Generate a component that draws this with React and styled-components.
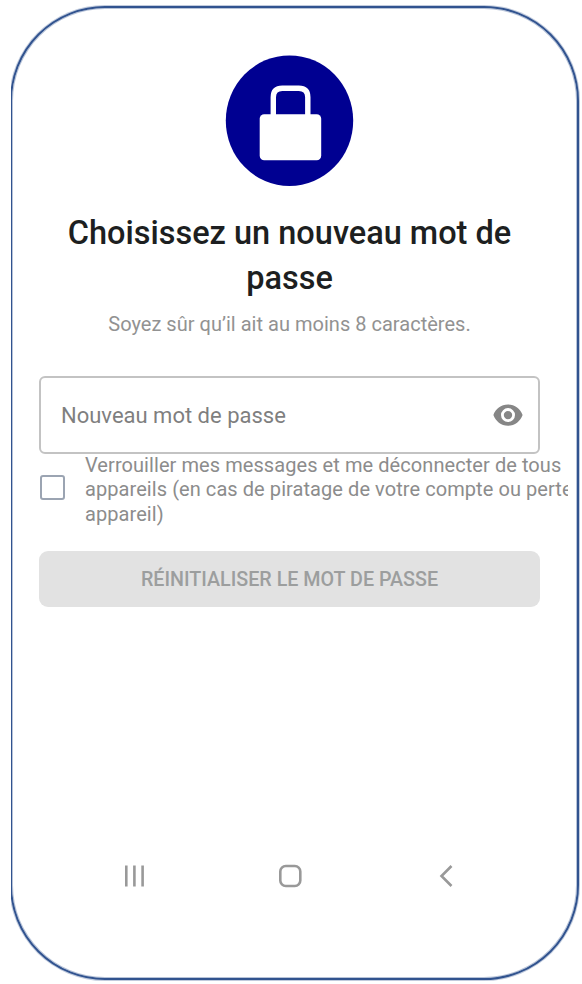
import React from "react";
import styled, { createGlobalStyle } from "styled-components";

const GlobalStyle = createGlobalStyle`
  * { box-sizing: border-box; }
  body { margin: 0; background: #fff; font-family: Roboto, "Liberation Sans", sans-serif; }
`;

const Page = styled.main`
  width: 582px;
  height: 984px;
  padding: 0 0 0 11px;
`;

const Clip = styled.div`
  height: 984px;
  padding-top: 6px;
  overflow: hidden;
`;

const Phone = styled.section`
  width: 569px;
  height: 974px;
  margin-left: -1px;
  padding: 47px 9px 0 27px;
  border: 2px solid #31538f;
  border-radius: 95px;
  box-shadow: 0 0 0 1px rgba(49, 83, 143, 0.3), inset 0 0 0 1px rgba(49, 83, 143, 0.35);
  display: flex;
  flex-direction: column;
  background: #fff;
`;

const Content = styled.div`
  width: 501px;
  display: flex;
  flex-direction: column;
  align-items: center;
`;

const Logo = styled.svg`
  display: block;
  width: 130px;
  height: 133px;
`;

const Title = styled.h1`
  margin: 23px 0 0;
  font-size: 32.5px;
  font-weight: 500;
  line-height: 45px;
  color: #1d1f21;
  text-align: center;
`;

const Hint = styled.p`
  margin: 11px 0 0;
  font-size: 20px;
  line-height: 24px;
  letter-spacing: 0.02px;
  color: #929292;
  white-space: nowrap;
`;

const Field = styled.div`
  width: 501px;
  height: 78px;
  margin-top: 40px;
  padding: 0 15px 0 20px;
  display: flex;
  align-items: center;
  justify-content: space-between;
  border: 2px solid #c3c3c3;
  border-radius: 6px;
  font-size: 22px;
  color: #7f7f7f;
`;

const EyeIcon = styled.svg`
  width: 30px;
  height: 24px;
`;

const Option = styled.div`
  width: 529px;
  display: flex;
  overflow: hidden;
`;

const Checkbox = styled.span`
  flex: none;
  width: 25px;
  height: 25px;
  margin: 21px 20px 0 1px;
  border: 2px solid #9ba4b2;
  border-radius: 3px;
`;

const OptionText = styled.p`
  margin: -1px 0 0;
  font-size: 20px;
  line-height: 24.3px;
  letter-spacing: 0.07px;
  color: #8c8c8c;
  white-space: nowrap;
`;

const Submit = styled.button`
  width: 501px;
  height: 56px;
  margin: 25px 0 0;
  padding: 2px 0 0;
  border: 0;
  border-radius: 9px;
  background: #e2e2e2;
  color: #9c9e9e;
  font: 500 19.7px/54px Roboto, sans-serif;
`;

const NavBar = styled.nav`
  width: 337px;
  height: 26px;
  margin: 256px 0 0 83px;
  display: flex;
  justify-content: space-between;
`;

const NavIcon = styled.svg`
  width: 26px;
  height: 26px;
  fill: none;
  stroke: #999;
  stroke-width: 2.6;
`;

export default function App() {
  return (
    <Page>
      <GlobalStyle />
      <Clip>
        <Phone>
          <Content>
            <Logo viewBox="225 55 130 133" aria-hidden="true">
              <ellipse cx="289.5" cy="120.7" rx="63.7" ry="65.3" fill="#000091" />
              <path d="M273.3 118V97.2q0-9 9-9h16.500q9 0 9 9V118" fill="none" stroke="#fff" strokeWidth="5.4" />
              <rect x="259.700" y="114.200" width="61.500" height="46" rx="4.500" fill="#fff" />
            </Logo>
            <Title>Choisissez un nouveau mot de<br />passe</Title>
            <Hint>Soyez sûr qu’il ait au moins 8 caractères.</Hint>
          </Content>
          <Field>
            <span>Nouveau mot de passe</span>
            <EyeIcon viewBox="493 403 30 24" aria-hidden="true">
              <path
                fillRule="evenodd"
                fill="#868686"
                d="M508 404.500C501 404.500 495.600 409 493.400 415C495.600 421 501 425.800 508 425.800S520.400 421 522.600 415C520.400 409 515 404.500 508 404.500ZM508 422.100a7 7 0 1 1 0-14a7 7 0 0 1 0 14ZM508 410.900a4.200 4.200 0 1 0 0 8.400a4.200 4.200 0 0 0 0-8.400Z"
              />
            </EyeIcon>
          </Field>
          <Option>
            <Checkbox role="checkbox" aria-checked="false" />
            <OptionText>
              Verrouiller mes messages et me déconnecter de tous<br />
              appareils (en cas de piratage de votre compte ou perte<br />
              appareil)
            </OptionText>
          </Option>
          <Submit disabled>RÉINITIALISER LE MOT DE PASSE</Submit>
          <NavBar>
            <NavIcon viewBox="0 0 26 26"><path d="M4.300 2.500v21M12.400 2.500v21M20.600 2.500v21" /></NavIcon>
            <NavIcon viewBox="0 0 26 26"><rect x="2.300" y="3" width="20" height="20" rx="5.500" /></NavIcon>
            <NavIcon viewBox="0 0 26 26"><path d="M18.500 3L8.500 13L18.500 23" /></NavIcon>
          </NavBar>
        </Phone>
      </Clip>
    </Page>
  );
}
